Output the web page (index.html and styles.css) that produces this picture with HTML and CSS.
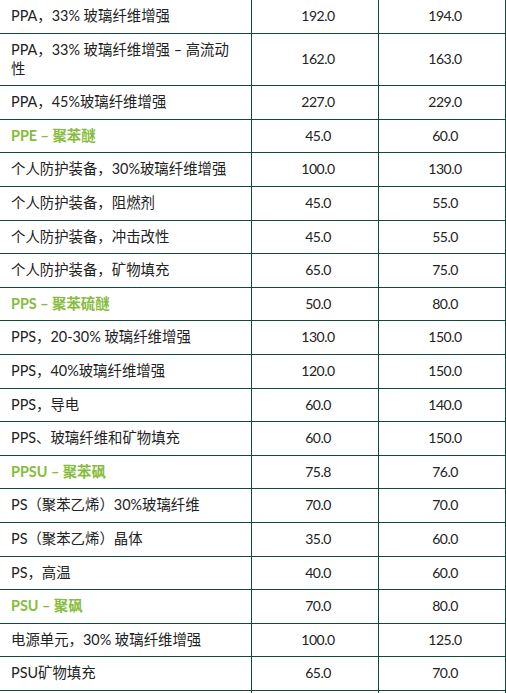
FILE: index.html
```html
<!DOCTYPE html>
<html lang="zh-CN">
<head>
<meta charset="utf-8">
<link rel="stylesheet" href="styles.css">
</head>
<body>
<table class="grid">
  <colgroup><col class="c1"><col class="c2"><col class="c3"></colgroup>
  <tbody>
    <tr><td>PPA，33% 玻璃纤维增强</td><td class="num">192.0</td><td class="num">194.0</td></tr>
    <tr><td>PPA，33% 玻璃纤维增强 – 高流动性</td><td class="num">162.0</td><td class="num">163.0</td></tr>
    <tr><td>PPA，45%玻璃纤维增强</td><td class="num">227.0</td><td class="num">229.0</td></tr>
    <tr class="cat"><td>PPE – 聚苯醚</td><td class="num">45.0</td><td class="num">60.0</td></tr>
    <tr><td>个人防护装备，30%玻璃纤维增强</td><td class="num">100.0</td><td class="num">130.0</td></tr>
    <tr><td>个人防护装备，阻燃剂</td><td class="num">45.0</td><td class="num">55.0</td></tr>
    <tr><td>个人防护装备，冲击改性</td><td class="num">45.0</td><td class="num">55.0</td></tr>
    <tr><td>个人防护装备，矿物填充</td><td class="num">65.0</td><td class="num">75.0</td></tr>
    <tr class="cat"><td>PPS – 聚苯硫醚</td><td class="num">50.0</td><td class="num">80.0</td></tr>
    <tr><td>PPS，20-30% 玻璃纤维增强</td><td class="num">130.0</td><td class="num">150.0</td></tr>
    <tr><td>PPS，40%玻璃纤维增强</td><td class="num">120.0</td><td class="num">150.0</td></tr>
    <tr><td>PPS，导电</td><td class="num">60.0</td><td class="num">140.0</td></tr>
    <tr><td>PPS、玻璃纤维和矿物填充</td><td class="num">60.0</td><td class="num">150.0</td></tr>
    <tr class="cat"><td>PPSU – 聚苯砜</td><td class="num">75.8</td><td class="num">76.0</td></tr>
    <tr><td>PS（聚苯乙烯）30%玻璃纤维</td><td class="num">70.0</td><td class="num">70.0</td></tr>
    <tr><td>PS（聚苯乙烯）晶体</td><td class="num">35.0</td><td class="num">60.0</td></tr>
    <tr><td>PS，高温</td><td class="num">40.0</td><td class="num">60.0</td></tr>
    <tr class="cat"><td>PSU – 聚砜</td><td class="num">70.0</td><td class="num">80.0</td></tr>
    <tr><td>电源单元，30% 玻璃纤维增强</td><td class="num">100.0</td><td class="num">125.0</td></tr>
    <tr><td>PSU矿物填充</td><td class="num">65.0</td><td class="num">70.0</td></tr>
    <tr class="tail"><td>&nbsp;</td><td class="num">&nbsp;</td><td class="num">&nbsp;</td></tr>
  </tbody>
</table>
</body>
</html>
```
FILE: styles.css
```css
html, body {
  margin: 0;
  padding: 0;
  background: #ffffff;
  overflow: hidden;
}
body {
  font-family: "Lato", "Noto Sans CJK SC", sans-serif;
  font-size: 14.4px;
  line-height: 18.6px;
  color: #222222;
}
.grid {
  border-collapse: collapse;
  table-layout: fixed;
  width: 506px;
  margin: -0.6px 0 0 -1px;
}
.c1 { width: 252px; }
.c2 { width: 127px; }
.c3 { width: 127px; }
.grid td {
  border: 1px solid #0d4b3d;
  padding: 7px 10px 7px 11px;
  vertical-align: middle;
}
.grid td.num {
  text-align: center;
  padding-left: 10px;
  padding-right: 4px;
  font-size: 14px;
  letter-spacing: -0.5px;
}
.cat td:first-child {
  color: #86bc3b;
  font-weight: 700;
}
```
